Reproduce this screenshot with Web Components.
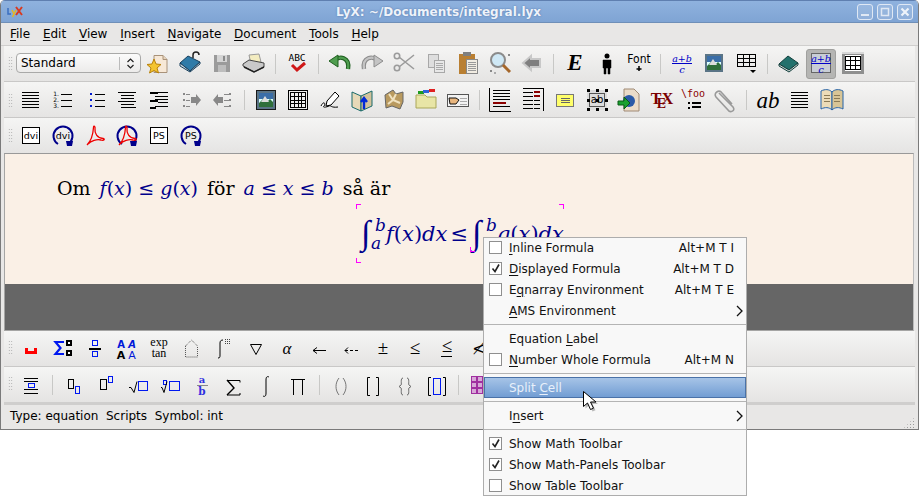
<!DOCTYPE html>
<html><head><meta charset="utf-8"><title>LyX</title>
<style>
html,body{margin:0;padding:0;background:#fff;width:919px;height:496px;overflow:hidden}
body{font:12px "DejaVu Sans",sans-serif;color:#000;position:relative}
u{text-underline-offset:2px}
</style></head><body>
<lyx-window>
  <lyx-titlebar>LyX: ~/Documents/integral.lyx</lyx-titlebar>
  <lyx-menubar>
    <span><u>F</u>ile</span><span><u>E</u>dit</span><span><u>V</u>iew</span><span><u>I</u>nsert</span><span><u>N</u>avigate</span><span><u>D</u>ocument</span><span><u>T</u>ools</span><span><u>H</u>elp</span>
  </lyx-menubar>
  <lyx-toolbar top="5" hm="10" icons="star open save print | abc | undo redo cut copy paste find back | E person font | frac image tabledrop | book fracOn table2"><lyx-combo>Standard</lyx-combo></lyx-toolbar>
  <lyx-toolbar top="6" hm="11" icons="just numlist bullets centerl desc indentr indentl | framed grid sign bookup map folder hand | labell labelr note abbox inset tex foo clip | ab linesb openbook"></lyx-toolbar>
  <lyx-toolbar top="6" hm="10" icons="dvi dviR pdf pdfR ps psR" last></lyx-toolbar>
  <lyx-editor></lyx-editor>
  <lyx-toolbar top="7" hm="9" icons="space sigmabox fracbox fonts exptan house intbox nabla alpha larrow dlarrow pm le leq nle"></lyx-toolbar>
  <lyx-toolbar top="7" hm="9" icons="eqn | sub sup sqrt root afrac sum int prod | paren brack brace bbox | matrix" last></lyx-toolbar>
  <lyx-statusbar>Type: equation&nbsp;&nbsp;Scripts&nbsp;&nbsp;Symbol: int</lyx-statusbar>
</lyx-window>
<lyx-menu>
  <lyx-item check="off" shortcut="Alt+M T I"><u>I</u>nline Formula</lyx-item>
  <lyx-item check="on" shortcut="Alt+M T D"><u>D</u>isplayed Formula</lyx-item>
  <lyx-item check="off" shortcut="Alt+M T E">E<u>q</u>narray Environment</lyx-item>
  <lyx-item arrow><u>A</u>MS Environment</lyx-item>
  <lyx-sep-line></lyx-sep-line>
  <lyx-item>Equation <u>L</u>abel</lyx-item>
  <lyx-item check="off" shortcut="Alt+M N"><u>N</u>umber Whole Formula</lyx-item>
  <lyx-sep-line></lyx-sep-line>
  <lyx-item hl>Split <u>C</u>ell</lyx-item>
  <lyx-sep-line></lyx-sep-line>
  <lyx-item arrow>I<u>n</u>sert</lyx-item>
  <lyx-sep-line></lyx-sep-line>
  <lyx-item check="on">Show Math Toolbar</lyx-item>
  <lyx-item check="on">Show Math-Panels Toolbar</lyx-item>
  <lyx-item check="off">Show Table Toolbar</lyx-item>
</lyx-menu>
<lyx-cursor></lyx-cursor>
<script>
const r=(x,y,w,h,f='#000')=>`<rect x="${x}" y="${y}" width="${w}" height="${h}" fill="${f}"/>`;
const b=(x,y,w,h,s='#000',f='none',sw=1)=>`<rect x="${x+.5}" y="${y+.5}" width="${w-1}" height="${h-1}" fill="${f}" stroke="${s}" stroke-width="${sw}"/>`;
const p=(d,s='#000',f='none',sw=1,e='')=>`<path d="${d}" stroke="${s}" fill="${f}" stroke-width="${sw}" ${e}/>`;
const t=(x,y,s,size,c='#000',fam='DejaVu Sans',e='')=>`<text x="${x}" y="${y}" font-size="${size}" fill="${c}" font-family="${fam}" text-anchor="middle" ${e}>${s}</text>`;
const SER='DejaVu Serif', LS='Liberation Serif';
const BL='#0018f0';
const hl=(x1,x2,ys,c='#000')=>ys.map(y=>r(x1,y,x2-x1,1,c)).join('');
const grid=(x,y,w,h,cx,cy,c='#000')=>{let o=b(x,y,w,h,c);for(let i=1;i<cx;i++)o+=r(x+Math.round(i*(w-1)/cx),y,1,h,c);for(let i=1;i<cy;i++)o+=r(x,y+Math.round(i*(h-1)/cy),w,1,c);return o};
const drop=(x,y)=>`<polygon points="${x},${y} ${x+6},${y} ${x+3},${y+3}" fill="#000"/>`;
const circ=(inner,c='#00008b')=>p('M7 20A9.5 9.5 0 1 1 17 20',c,'none',2)+`<polygon points="15,17 22,17 21,22 16,22" fill="${c}"/>`+inner;
const pdfGlyph=p('M4 21C7 18 10 11 10.5 3.5C10.5 1 12.5 2 12 5C11.5 9 14 14 20 14.5C22.5 15 21 17 18 16C14 15 8 16.5 5 20','#e00','none',1.3);
const fracIcon=()=>t(12,10.5,'a+b',9.5,'#0000c8',SER,'font-style="italic"')+r(2,12,20,1,'#0000c8')+t(12,21.5,'c',10,'#0000c8',SER,'font-style="italic"');
const pic=()=>r(3,3,18,18,'#5a7486')+r(5,5,14,14,'#dff')+r(5,5,14,6,'#3a6ea8')+`<polygon points="5,15 10,10 14,13 16,11 19,14 19,19 5,19" fill="#2f6f3a"/>`+`<polygon points="7,14 11,8 15,14" fill="#ddd"/>`;
const arrowL=(a,c)=>p('M6 10C11 4 22 6 20 18',a,'none',4.4)+p('M6 10C11 4 22 6 20 18',c,'none',2.2)+`<polygon points="1,10 10,4 10,16" fill="${c}" stroke="${a}"/>`;
const ICONS={
star:p('M8 4.5h9l4 4v13H8z','#a8927a','#f7e8d6')+p('M17 4.5v4h4','#a8927a','#e8d5bd')+`<polygon points="8,8 10,13 15,13.5 11,17 12.5,22 8,19.5 3.5,22 5,17 1,13.5 6,13" fill="#f4c430" stroke="#b9820a"/>`,
open:`<polygon points="2,12 10,5 22,11 12,20" fill="#2f7ba8" stroke="#173f5c"/>`+p('M2 12v3l10 6 10-8v-2l-10 9z','#173f5c','#c8d6de')+p('M15 7V4a3 3 0 0 1 6 0','#222','none',1.5),
save:r(4,4,16,17,'#9b9b9b')+r(7,4,10,7,'#d4d4d4')+r(8,14,8,7,'#bdbdbd')+r(13,5,2,5,'#8a8a8a'),
print:`<polygon points="7,4 17,3 19,11 9,13" fill="#f3ecc0" stroke="#999"/>`+`<polygon points="1,13 7,9 22,12 22,16 12,21 1,15" fill="#c9c9c9" stroke="#444"/>`+p('M2 16l10 5 10-5','#222','none',1.5),
abc:t(12,10,'ABC',9.5,'#000','DejaVu Sans Mono')+p('M7 14l5 5 8-7','#cf1818','none',3),
undo:arrowL('#1f5f1f','#4f9d4f'),
redo:`<g transform="matrix(-1 0 0 1 24 0)">${arrowL('#8c8c8c','#c4c4c4')}</g>`,
cut:p('M22 4L7 16M22 18L7 6','#9b9b9b','none',1.6)+`<circle cx="5" cy="5" r="2.7" fill="none" stroke="#9b9b9b" stroke-width="1.6"/><circle cx="5" cy="17" r="2.7" fill="none" stroke="#9b9b9b" stroke-width="1.6"/>`,
copy:b(4,3,11,14,'#a8a8a8','#dedede')+b(10,9,11,13,'#a8a8a8','#e8e8e8')+hl(12,19,[12,14,16,18],'#aaa'),
paste:r(3,3,16,20,'#b97f32')+r(7,1,8,4,'#7f7f7f')+b(10,8,12,15,'#888','#f1ece2')+hl(12,20,[11,13,15,17,19],'#999'),
find:`<circle cx="10" cy="9" r="7" fill="#cfe8f5" stroke="#8b8b8b" stroke-width="2"/>`+p('M15 14l7 7','#a5672b','none',3)+r(20,3,2,2,'#888')+r(2,19,2,2,'#888')+r(6,21,2,2,'#aaa'),
back:`<polygon points="3,12 11,5 11,8 20,8 20,16 11,16 11,19" fill="#7f7f7f" stroke="#c8c8c8" stroke-width="2"/>`,
E:t(12,19,'E',23,'#000',LS,'font-style="italic" font-weight="bold"'),
person:`<circle cx="12" cy="5" r="2.5"/>`+p('M8 9h8v8h-1v6h-2v-6h-2v6H9v-6H8z','#000','#000',.5),
font:t(12,12,'Font',12,'#000','DejaVu Sans Condensed')+p('M12 15v5M9.5 18h5','#000','none',1.5),
frac:fracIcon(),
image:pic(),
tabledrop:hl(3,21,[3,7,11,15])+[3,9,15,21].map(x=>r(x,3,1,13)).join('')+drop(16,19),
book:`<polygon points="2,13 11,5 21,12 12,19" fill="#23716c" stroke="#123f3c"/>`+p('M2 13v2l10 6 9-7v-2l-9 7z','#123f3c','#cfd6d4',1),
fracOn:r(2,2,20,20,'#c9ced6')+b(2,2,20,20,'#666')+fracIcon(),
table2:r(1,1,22,22,'#8f8f8f')+r(1,1,22,2,'#d8d8d8')+r(4,4,16,16,'#fff')+grid(4,5,16,14,3,3),
just:hl(3,20,[4,7,10,13,16,19]),
numlist:t(5,8,'1.',6)+t(5,14,'2.',6)+t(5,20,'3.',6)+hl(10,21,[6,12,18],'#000'),
bullets:[6,12,18].map(y=>r(7,y-1,2,2,'#0018d0')).join('')+hl(12,22,[6,12,18]),
centerl:hl(3,21,[4,13])+hl(6,19,[7,10,16])+hl(6,21,[19]),
desc:r(3,4,8,2)+r(11,4,10,1)+hl(8,21,[8,11])+r(3,12,8,2)+r(11,14,10,1)+hl(8,21,[18])+r(3,19,6,2),
indentr:hl(7,11,[6,12,18],'#888')+`<polygon points="12,9 17,9 17,6 22,12 17,18 17,15 12,15" fill="#888"/>`+r(4,5,2,2,'#888')+r(4,11,2,2,'#888')+r(4,17,2,2,'#888'),
indentl:hl(13,20,[6,12,18],'#888')+`<polygon points="12,9 7,9 7,6 2,12 7,18 7,15 12,15" fill="#888"/>`+r(18,5,2,2,'#888')+r(18,11,2,2,'#888')+r(18,17,2,2,'#888'),
framed:r(2,2,20,20,'#1a1a1a')+r(3,3,18,18,'#ccc')+pic(),
grid:r(2,2,20,20,'#000')+r(3,3,18,18,'#eee')+grid(4,4,16,16,4,4),
sign:p('M3 18c3-6 5-2 3 0s3 1 5 0 2 2 9 1M9 13L17 4l4 4-8 9-5 1z','#000','#fff',1),
bookup:p('M2 4l9 4v15l-9-4z','#1a6b6b','#e7d9b8')+p('M22 3l-11 5v15l11-5z','#1a6b6b','#d3c29b')+p('M14 21V11M11 14l3-4 3 4','#0028d8','none',2.4),
map:`<polygon points="3,7 11,2 14,6 21,4 21,14 18,21 10,18 4,20" fill="#b99a5f" stroke="#666"/>`+p('M7 6l4 6-5 4M14 6l-3 6 7 3','#f0e2c0','none',2),
folder:p('M2 7h9l2 2h9v11H2z','#aaa75a','#e8e5a6')+r(4,3,6,3,'#1e9c1e')+r(9,2,6,3,'#2f62d8')+r(15,1,6,3,'#e02020'),
hand:b(1,6,22,13,'#555','#f3f3f3')+p('M3 10h7l3 2-3 4H4z','#111','#e9b67e',1)+hl(14,21,[10,13,16],'#aaa'),
labell:p('M.5 0V23.5H22','#000')+hl(4,21,[2,5,8,11])+r(4,14,13,2,'#8b0000')+hl(4,21,[18]),
labelr:p('M22.5 0V23','#000')+p('M2 .5H22','#000')+hl(2,12,[4,8,12,16,20])+hl(13,19,[12,16,20])+r(13,3,6,2,'#8b0000')+r(13,7,6,2,'#8b0000'),
note:r(3,6,18,13,'#777')+r(4,7,16,11,'#ffff6a')+hl(8,17,[10,12,14],'#666'),
abbox:r(2,2,20,20,'#dcdcdc')+t(12,15,'ab',10)+b(4,5,16,14,'#555')+[2,11,20].flatMap(x=>[1,11,20].map(y=>r(x,y,3,3))).join(''),
inset:p('M7 1h10l5 5v17H7z','#a08a74','#ebdcc9')+`<circle cx="12" cy="13" r="6" fill="#2b5aa8"/>`+`<polygon points="1,13 7,13 7,9 13,15 7,21 7,17 1,17" fill="#1aa030" stroke="#0a5a14"/>`,
tex:t(7,16,'T',16,'#7a0000',LS,'font-weight="bold"')+t(12.5,20,'E',14,'#7a0000',LS,'font-weight="bold"')+t(18.5,16,'X',16,'#7a0000',LS,'font-weight="bold"'),
foo:t(12,9,'\\foo',10,'#8b0000','DejaVu Sans Mono')+r(7,14,2,2)+r(7,19,2,2)+r(11,14,9,2)+r(11,18,9,2),
clip:p('M6 5l14 14c3 4-3 6-5 3L3 9c-3-4 3-8 6-4l10 11','#9a9a9a','none',1.6),
ab:t(12,20,'ab',23,'#000',LS,'font-style="italic"'),
linesb:hl(3,20,[4,7,10,13,16,19]),
openbook:p('M1 3c4-2 8-2 11 1v18c-3-3-7-3-11-1z','#2563a8','#ecdcb8')+p('M23 3c-4-2-8-2-11 1v18c3-3 7-3 11-1z','#2563a8','#d8c596')+hl(4,10,[7,10,13],'#8a7a55')+hl(14,20,[7,10,13],'#8a7a55'),
dvi:r(3,3,18,17,'#fff')+b(3,3,18,17)+t(12,15,'dvi',9.5),
dviR:circ(t(12,15,'dvi',9.5)),
pdf:pdfGlyph,
pdfR:circ(pdfGlyph),
ps:r(3,3,18,17,'#fff')+b(3,3,18,17)+t(12,15,'PS',9.5),
psR:circ(t(12,15,'PS',9.5)),
space:p('M7.5 10v4.5h9V10','#f00','none',3),
sigmabox:p('M13 4H4.5l5 6-5 6H13','#0018f0','none',2.2)+r(15,2,6,6)+r(17,4,2,2,'#fff')+r(15,12,6,6)+r(17,14,2,2,'#fff'),
fracbox:b(9,2,6,6,BL)+r(6,10,12,2)+b(9,13,6,6,BL),
fonts:t(6,10,'A',10,'#0018d8','DejaVu Sans','font-weight="bold"')+t(17,10,'A',10,'#0018d8','DejaVu Sans','font-weight="bold" font-style="italic"')+t(6,21,'A',11,'#000','DejaVu Sans','font-weight="bold"')+t(17,21,'A',11,'#0018d8'),
exptan:t(12,8,'exp',12,'#000',LS)+t(12,19,'tan',12,'#000',LS),
house:p('M6.5 8l6-6 6 6v11h-12z','#555','none',1,'stroke-dasharray="1 1"'),
intbox:p('M7 20c2 0 2-1 2-3V5c0-2 1-3 3-3','#000')+[14,16,18].flatMap(x=>[1,3,5].map(y=>r(x,y,1,1,'#444'))).join(''),
nabla:p('M7.5 6.5h11l-5.5 10z'),
alpha:t(12,16,'α',17,'#000',LS,'font-style="italic"'),
larrow:p('M6 12.5h13M10 9.5l-4 3 4 3'),
dlarrow:p('M6 12.5h3M11 12.5h3M16 12.5h3M9 9.5l-3 3 3 3'),
pm:t(12,16,'±',19,'#000',LS),
le:t(12,16,'≤',19,'#000',LS),
leq:t(12,14,'≤',19,'#000',LS)+r(6,18,11,1),
nle:t(12,16,'≮',16,'#000',SER),
eqn:hl(5,19,[4,7,15,19])+b(9,9,7,5,BL),
sub:b(6,5,6,10)+b(13,12,5,8,BL),
sup:b(6,5,7,11)+b(14,2,5,7,BL),
sqrt:p('M3 13.5h2l3 5 3-11','#000')+b(12,7,10,10,BL),
root:b(5,6,4,5,BL)+p('M3 13.5h1l2 5 3-11','#000')+b(11,7,11,10,BL),
afrac:t(12,9,'a',10,'#3030e0',SER,'font-weight="bold"')+r(7,11,11,1,'#888')+t(12,21,'b',10.5,'#3030e0',SER,'font-weight="bold"'),
sum:p('M5 6.5h13v2','#000')+p('M5 6l7 8-7 7','#000','none',1.4)+p('M5 21h13v-2'),
int:p('M9 22c2 1 3 0 3-3V6c0-3 1-4 3-3'),
prod:p('M5 5.5h14M7.5 5v16M16.5 5v16'),
paren:p('M10 4c-4 5-4 12 0 17M14 4c4 5 4 12 0 17','#777'),
brack:p('M9 3.5H6.5v18H9M15 3.5h2.5v18H15','#000'),
brace:p('M10 4c-3 0-1 7-2 7l-2 1.5 2 1.5c1 0-1 7 2 7M14 4c3 0 1 7 2 7l2 1.5-2 1.5c-1 0 1 7-2 7','#666'),
bbox:p('M6 3.5H3.5v18H6M18 3.5h2.5v18H18','#000')+b(8,4,8,17,BL),
matrix:[3,9,15].flatMap(x=>[2,8,14].map(y=>b(x,y,6,6,'#a030a0','#d8a8d8'))).join('')
};
function el(name,html,init){customElements.define(name,class extends HTMLElement{
  constructor(){super();this.attachShadow({mode:'open'});}
  connectedCallback(){if(this._i)return;this._i=1;this.shadowRoot.innerHTML=typeof html==='function'?html(this):html;if(init)init(this)}
})}
el('lyx-window',`<style>:host{display:flex;flex-direction:column;width:919px;height:430px;box-sizing:border-box;background:#e8e7e6;border:1px solid #7a7a7a;border-top:none;border-radius:5px 5px 0 0;overflow:hidden}
::slotted(lyx-toolbar){margin:0 3px}::slotted(lyx-editor){margin:0 4px 0 3px}</style><slot></slot>`);
el('lyx-titlebar',`<style>:host{display:flex;align-items:center;height:21px;margin:0 -1px;background:linear-gradient(#8fb2de,#7fa4d4);border-top:1px solid #5f7fb0;border-bottom:1px solid #6f8fb8;font:bold 12px "DejaVu Sans",sans-serif;color:#eef3fa}
.logo{width:24px;flex:none;padding-left:6px}.c{flex:1;text-align:center;text-shadow:0 0 2px #4f73a8;padding-right:10px}
.w{display:flex;gap:4px;padding-right:6px}.w span{width:14px;height:14px;border:1px solid #dfe8f4;border-radius:3px;background:rgba(255,255,255,.12);display:block}
svg{display:block}</style>
<div class="logo"><svg width="18" height="14" viewBox="0 0 18 14"><path d="M2 3v6h3" stroke="#3a6fc0" stroke-width="1.5" fill="none"/><path d="M6 5l2 4-1.5 3M10 5L8 9" stroke="#e8b820" stroke-width="1.5" fill="none"/><path d="M10 2l6 8M16 2l-6 8" stroke="#d83a20" stroke-width="2" fill="none"/></svg></div>
<div class="c"><slot></slot></div>
<div class="w"><span><svg width="14" height="14"><rect x="3" y="9" width="8" height="2" fill="#dfe8f4"/></svg></span><span><svg width="14" height="14"><rect x="3.5" y="3.5" width="7" height="7" fill="none" stroke="#dfe8f4" stroke-width="1.5"/></svg></span><span><svg width="14" height="14"><path d="M3.5 3.5l7 7M10.5 3.5l-7 7" stroke="#eef3fa" stroke-width="2.2"/></svg></span></div>`);
el('lyx-menubar',`<style>:host{display:flex;height:22px;align-items:center;padding-left:9px;gap:12.8px;font:12px "DejaVu Sans",sans-serif;background:#e8e7e6;border-bottom:1px solid #cfcecd}</style><slot></slot>`);
el('lyx-handle',`<style>:host{display:block;width:5px;height:16px;flex:none;background-image:radial-gradient(circle,#a9a9a9 .7px,transparent .8px);background-size:2.5px 3px}</style>`);
el('lyx-sep',`<style>:host{display:flex;width:11px;flex:none;justify-content:center;height:20px}:host::after{content:"";width:1px;background:#c8c8c6}</style>`);
el('lyx-btn',h=>`<style>:host{display:block;width:32px;flex:none;position:relative}
svg{display:block;margin:0 auto;position:relative}
${h.getAttribute('icon')==='fracOn'?':host::before{content:"";position:absolute;left:1px;top:-2px;width:30px;height:30px;background:#b5b5b3;border:1px solid #a0a09e;border-radius:3px;box-sizing:border-box}':''}
</style><svg width="24" height="24" viewBox="0 0 24 24" style="overflow:visible">${ICONS[h.getAttribute('icon')]||''}</svg>`);
el('lyx-toolbar',`<style>:host{display:flex;flex:none;height:35px;padding-left:4px;background:linear-gradient(#f5f5f4,#e5e4e3);border-bottom:1px solid #c9c8c7;overflow:hidden}
#row{display:flex;align-items:flex-start}.h{margin-right:2px}
:host([last]){border-bottom:none}
</style><div id="row"><lyx-handle class="h"></lyx-handle><slot></slot></div>`,h=>{
  const row=h.shadowRoot.getElementById('row'),top=+h.getAttribute('top'),hm=+h.getAttribute('hm');
  row.style.paddingTop=top+'px';
  row.querySelector('lyx-handle').style.marginTop=(hm-top)+'px';
  h.getAttribute('icons').split(' ').forEach(n=>{
    let e;
    if(n==='|'){e=document.createElement('lyx-sep');e.style.marginTop=(8-top)+'px';}
    else{e=document.createElement('lyx-btn');e.setAttribute('icon',n);}
    row.appendChild(e);
  });
});
el('lyx-combo',`<style>:host{display:flex;width:125px;height:20px;margin:2px 1px 0 1px;box-sizing:border-box;border:1px solid #a9a9a8;border-radius:4px;background:linear-gradient(#fbfbfb,#ecebea);align-items:center;padding-left:4px;font:12px "DejaVu Sans",sans-serif}
.t{flex:1}.a{width:20px;height:13px;border-left:1px solid #bbb;display:flex;justify-content:center}</style>
<span class="t"><slot></slot></span><span class="a"><svg width="9" height="13"><path d="M1.5 5l3-3 3 3M1.5 8l3 3 3-3" fill="none" stroke="#222" stroke-width="1.2"/></svg></span>`);
el('lyx-editor',`<style>:host{display:flex;flex-direction:column;flex:none;height:178px;box-sizing:border-box;border:1px solid #a5a5a4;border-top:1px solid #999;border-right:1px solid #bbb;background:#faf0e6;font:19px "DejaVu Serif",serif;color:#000}
.doc{height:130px;padding-left:52px;box-sizing:border-box}
.l1{padding-top:21px;line-height:26px;height:47px;box-sizing:border-box;white-space:nowrap}
.m{color:#00008b;font-style:italic}.m span{font-style:normal}
.s{margin-left:9px}
.f{position:relative;display:block;margin:3px 0 0 299px;width:208px;height:59px;padding:6px 0 0 5px;box-sizing:border-box;line-height:30px;font-size:21px;color:#00008b;font-style:italic;white-space:nowrap}
.f .o{font-style:normal}.f .i{font-family:"Liberation Serif",serif;font-style:normal;font-size:34px;line-height:20px;vertical-align:-3px;margin-right:4.7px}.f .u{font-size:17px;vertical-align:10px}.f .d{font-size:17px;vertical-align:-8px;margin-left:-15px;margin-right:5px}
.f .g2{margin-left:4px}
.c{position:absolute;width:4px;height:4px;border:solid #f0f;border-width:0}
.tl{left:0;top:0;border-width:1px 0 0 1px}.tr{right:0;top:0;border-width:1px 1px 0 0}.bl{left:0;bottom:0;border-width:0 0 1px 1px}
.im{left:114px;top:43px;border-width:0 0 1px 1px}
.g{height:46px;background:#666}</style>
<div class="doc"><div class="l1">Om<span class="m s">f<span>(</span>x<span>)</span> <span>≤</span> g<span>(</span>x<span>)</span></span><span class="s">för</span><span class="m s">a <span>≤</span> x <span>≤</span> b</span><span class="s">så är</span></div>
<div class="f"><i class="c tl"></i><i class="c tr"></i><i class="c bl"></i><i class="c im"></i><span class="i">∫</span><span class="u">b</span><span class="d">a</span>f<span class="o">(</span>x<span class="o">)</span>dx<span class="o" style="margin-left:3px">≤</span><span class="i g2">∫</span><span class="u">b</span>g<span class="o">(</span>x<span class="o">)</span>dx</div></div>
<div class="g"></div>`);
el('lyx-statusbar',`<style>:host{display:flex;flex:1;align-items:center;margin:0 3px;border-top:3px solid #cfcecd;padding:0 0 2px 6px;font:12px "DejaVu Sans",sans-serif;background:#e8e7e6;position:relative}
.g{position:absolute;right:0;bottom:0;width:12px;height:12px;background-image:radial-gradient(circle,#9a9a9a .7px,transparent .8px);background-size:3px 3px;clip-path:polygon(100% 0,100% 100%,0 100%)}</style><slot></slot><div class="g"></div>`);
el('lyx-menu',`<style>:host{position:absolute;left:483px;top:237px;width:264px;height:259px;box-sizing:border-box;display:flex;flex-direction:column;background:#f8f8f8;border:1px solid #adadad;font:12px "DejaVu Sans",sans-serif}
::slotted(:first-child){margin-top:-1px}</style><slot></slot>`);
el('lyx-item',h=>{const c=h.getAttribute('check');return `<style>:host{display:flex;flex:none;height:21px;align-items:center;box-sizing:border-box;position:relative;color:#111;white-space:nowrap}
:host([hl]){background:linear-gradient(#a9c6e8,#6f9bd2);outline:1px solid #4a72a8;outline-offset:-1px;color:#e8f0fa}
.b{width:25px;flex:none;display:flex;padding-left:5px;box-sizing:border-box}.l{flex:1}.s{padding-right:12px}
.x{width:13px;height:13px;box-sizing:border-box;border:1px solid #8f8f8f;background:#fff;display:block}svg{display:block}.ar{margin-right:3px}</style>
<span class="b">${c?`<span class="x">${c==='on'?'<svg width="11" height="11"><path d="M2.5 5.5l2.5 3 4-7" fill="none" stroke="#222" stroke-width="1.6"/></svg>':''}</span>`:''}</span><span class="l"><slot></slot></span>
${h.getAttribute('shortcut')?`<span class="s">${h.getAttribute('shortcut')}</span>`:''}${h.hasAttribute('arrow')?'<svg class="ar" width="7" height="12"><path d="M1 1l5 5-5 5" fill="none" stroke="#111" stroke-width="1.3"/></svg>':''}`});
el('lyx-sep-line',`<style>:host{display:block;flex:none;height:1px;background:#b4b4b4;margin:3px 0}</style>`);
el('lyx-cursor',`<style>:host{position:absolute;left:582px;top:390px;display:block;width:16px;height:22px}svg{display:block;overflow:visible}</style>
<svg width="16" height="22"><path d="M2 2v15l4-3.5 3 6.5 3-1.3-3-6.2h5.5z" fill="#000" opacity=".25" transform="translate(1.5 1.5)"/><path d="M1.5 1.5v15l4-3.5 3 6.5 3-1.3-3-6.2h5.5z" fill="#fff" stroke="#000"/></svg>`);
</script>
</body></html>
